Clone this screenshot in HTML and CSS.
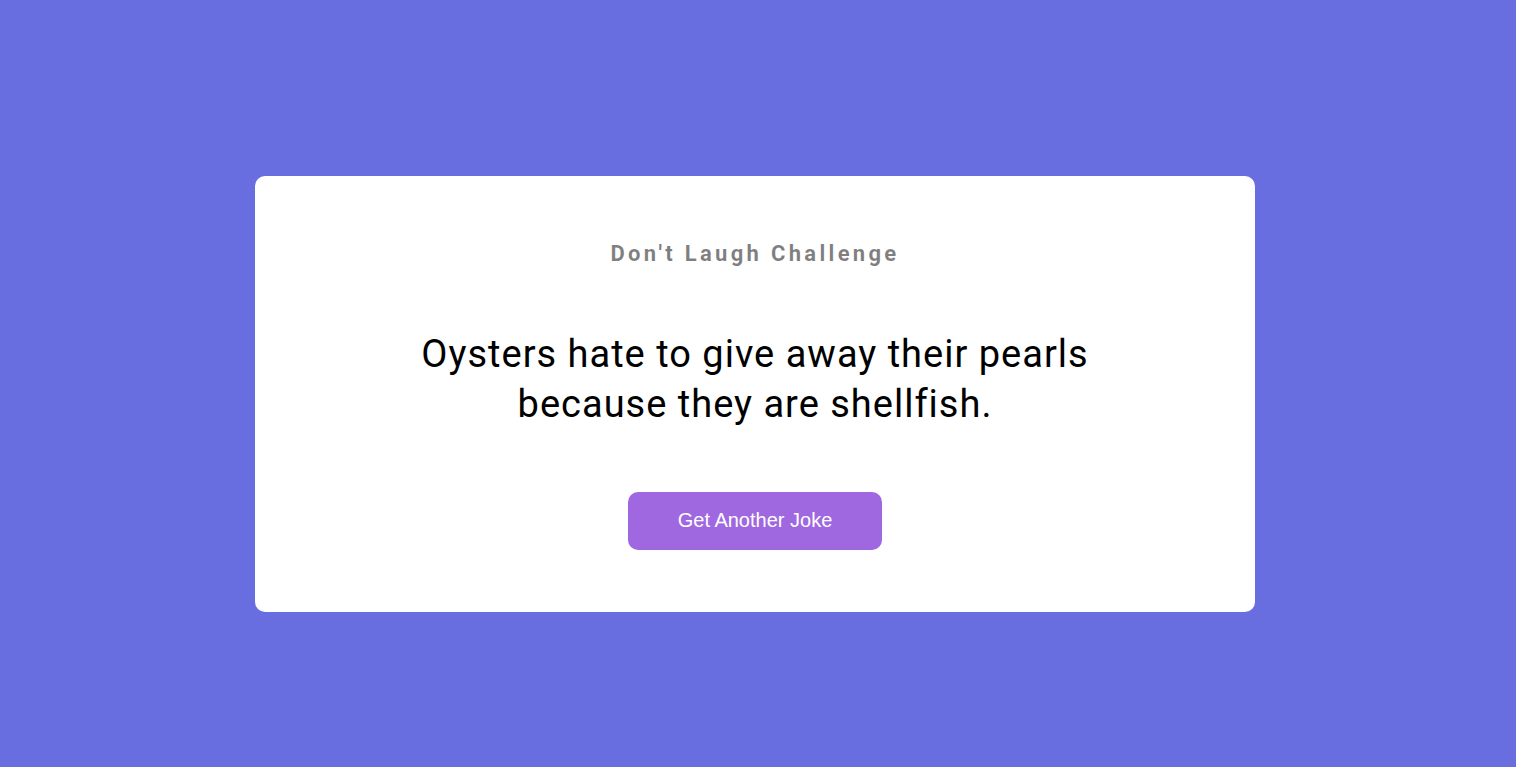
FILE: index.html
```html
<!DOCTYPE html>
<html lang="en">
<head>
<meta charset="UTF-8">
<title>Dad Jokes</title>
<link rel="stylesheet" href="styles.css">
</head>
<body>
  <div class="container">
    <h3 class="title">Don't Laugh Challenge</h3>
    <div class="joke">Oysters hate to give away their pearls because they are shellfish.</div>
    <button class="btn">Get Another Joke</button>
  </div>
</body>
</html>
```
FILE: styles.css
```css
* { box-sizing: border-box; }
html, body { margin: 0; }
body {
  background-color: #686de0;
  font-family: Roboto, "Liberation Sans", sans-serif;
  min-height: 100vh;
  padding: 176px 6px 0 0;
}
.container {
  background-color: #fff;
  border-radius: 10px;
  width: 1000px;
  margin: 0 auto;
  padding: 65px 20px 62px;
  text-align: center;
}
.title {
  margin: 0;
  font-size: 22px;
  line-height: 26px;
  font-weight: 700;
  letter-spacing: 3.3px;
  color: rgba(0,0,0,0.5);
}
.joke {
  margin: 62px auto 63px;
  max-width: 720px;
  font-size: 38px;
  line-height: 50px;
  letter-spacing: 1px;
  color: #000;
}
.btn {
  display: inline-block;
  background-color: #9f68e0;
  color: #fff;
  border: 0;
  border-radius: 10px;
  width: 254px;
  height: 58px;
  padding: 0 0 2px;
  font-family: "Liberation Sans", Arial, sans-serif;
  font-size: 20px;
  cursor: pointer;
}
```
